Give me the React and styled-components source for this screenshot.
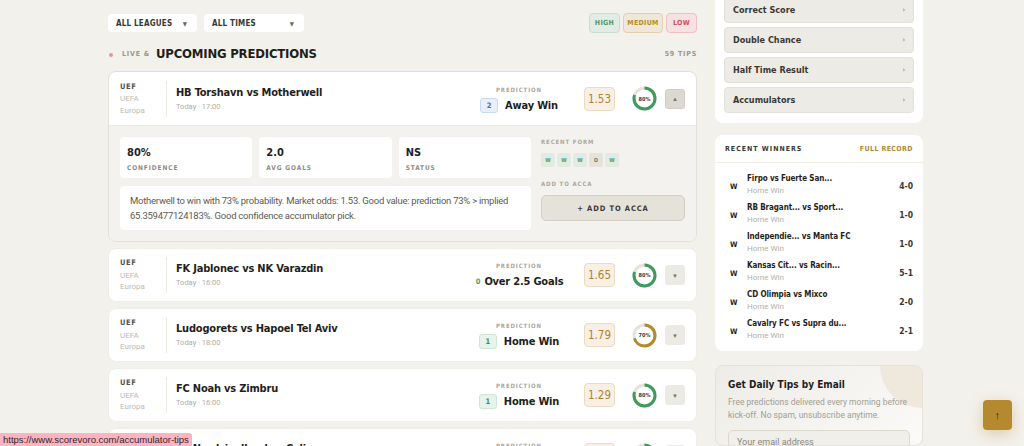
import React from "react";
import styled, { createGlobalStyle, css } from "styled-components";

const cond = css`
  font-family: "Noto Sans ExtraCondensed", "Noto Sans Condensed", "DejaVu Sans Condensed", sans-serif;
  font-weight: 700;
`;
const BODY = `Roboto, "Liberation Sans", sans-serif`;

const GlobalStyle = createGlobalStyle`
  html, body { margin: 0; padding: 0; background: #f3f1ec; overflow: hidden; }
  body { font-family: ${BODY}; color: #1f1e1b; }
  * { box-sizing: border-box; }
`;

const matches = [
  { id: 1, title: "HB Torshavn vs Motherwell", time: "Today · 17:00", code: "2", tone: "blue", pick: "Away Win", odds: "1.53", conf: 80, open: true },
  { id: 2, title: "FK Jablonec vs NK Varazdin", time: "Today · 16:00", code: "0", tone: "plain", pick: "Over 2.5 Goals", odds: "1.65", conf: 80 },
  { id: 3, title: "Ludogorets vs Hapoel Tel Aviv", time: "Today · 18:00", code: "1", tone: "green", pick: "Home Win", odds: "1.79", conf: 70 },
  { id: 4, title: "FC Noah vs Zimbru", time: "Today · 16:00", code: "1", tone: "green", pick: "Home Win", odds: "1.29", conf: 80 },
  { id: 5, title: "FC Nordsjaelland vs Celje", time: "Today · 18:00", code: "1", tone: "green", pick: "Home Win", odds: "1.48", conf: 80 },
];

const winners = [
  { t: "Firpo vs Fuerte San...", s: "4-0" },
  { t: "RB Bragant... vs Sport...", s: "1-0" },
  { t: "Independie... vs Manta FC", s: "1-0" },
  { t: "Kansas Cit... vs Racin...", s: "5-1" },
  { t: "CD Olimpia vs Mixco", s: "2-0" },
  { t: "Cavalry FC vs Supra du...", s: "2-1" },
];

const markets = ["Correct Score", "Double Chance", "Half Time Result", "Accumulators"];

const Page = styled.div`
  display: flex;
  gap: 18px;
  padding: 13px 0 0 108px;
  height: 446px;
  overflow: hidden;
`;

const Main = styled.div`
  width: 589px;
  display: flex;
  flex-direction: column;
  flex-shrink: 0;
`;

const Toolbar = styled.div`
  display: flex;
  align-items: center;
  justify-content: space-between;
  height: 20px;
`;

const Group = styled.div`
  display: flex;
  align-items: center;
  gap: ${(p) => p.gap || 7}px;
`;

const Select = styled.div`
  width: ${(p) => p.w}px;
  height: 18px;
  background: #fff;
  border-radius: 4px;
  display: flex;
  align-items: center;
  justify-content: space-between;
  padding: 0 8px 0 8px;
  ${cond};
  font-size: 8px;
  letter-spacing: 0.2px;
  color: #3a3833;
  span { font-size: 6px; color: #6b675f; margin-right: 2px; }
`;

const tones = {
  high: { bg: "#e3ece4", bd: "#c9dccd", fg: "#4f9a66" },
  medium: { bg: "#efe7da", bd: "#e2cfac", fg: "#b5892e" },
  low: { bg: "#f6e2e2", bd: "#efbfc3", fg: "#d0505a" },
};

const Pill = styled.div`
  height: 20px;
  width: ${(p) => p.w}px;
  border-radius: 4px;
  display: flex;
  align-items: center;
  justify-content: center;
  ${cond};
  font-size: 7px;
  letter-spacing: 0.3px;
  background: ${(p) => tones[p.tone].bg};
  border: 1px solid ${(p) => tones[p.tone].bd};
  color: ${(p) => tones[p.tone].fg};
`;

const HeadRow = styled.div`
  display: flex;
  align-items: center;
  justify-content: space-between;
  margin: 13px 0 10px;
  height: 16px;
`;

const Title = styled.div`
  display: flex;
  align-items: center;
  gap: 6px;
  padding-left: 1px;
`;

const Dot = styled.i`
  width: 4px;
  height: 4px;
  border-radius: 50%;
  background: #e3959b;
  margin-right: 3px;
  margin-top: 3px;
`;

const Small = styled.span`
  ${cond};
  font-size: 7px;
  letter-spacing: 0.8px;
  color: #9b978e;
`;

const Heading = styled.h2`
  margin: 0;
  ${cond};
  font-size: 13px;
  letter-spacing: -0.2px;
  color: #1f1e1b;
`;

const List = styled.div`
  display: flex;
  flex-direction: column;
  gap: 6px;
`;

const Card = styled.div`
  background: #fff;
  border: 1px solid ${(p) => (p.open ? "#e2dfd7" : "#f0eee9")};
  border-radius: 8px;
  overflow: hidden;
  flex-shrink: 0;
`;

const CardHead = styled.div`
  height: ${(p) => (p.open ? 53 : 52)}px;
  display: flex;
  align-items: center;
  padding: 0 11px;
`;

const League = styled.div`
  width: 46px;
  display: flex;
  flex-direction: column;
  font-size: 8px;
  line-height: 11.5px;
  color: #bdb9b0;
  b {
    ${cond};
    font-size: 7.5px;
    letter-spacing: 0.6px;
    color: #55524b;
    margin-bottom: 1px;
  }
`;

const Divider = styled.div`
  width: 1px;
  height: 36px;
  background: #eeebe5;
  margin-right: 9px;
`;

const MatchInfo = styled.div`
  flex: 1;
  display: flex;
  flex-direction: column;
  gap: 3px;
  margin-top: -1px;
`;

const MatchTitle = styled.div`
  ${cond};
  font-size: 11px;
  letter-spacing: -0.2px;
  color: #1f1e1b;
  white-space: nowrap;
`;

const Time = styled.div`
  font-size: 7.5px;
  color: #b0aca3;
`;

const Prediction = styled.div`
  width: 72px;
  display: flex;
  flex-direction: column;
  align-items: center;
  gap: 4px;
  margin-top: 1px;
`;

const Label = styled.div`
  ${cond};
  font-size: 6px;
  line-height: 8px;
  letter-spacing: 0.9px;
  color: #aaa69d;
`;

const PickRow = styled.div`
  display: flex;
  align-items: center;
  white-space: nowrap;
  gap: ${(p) => (p.plain ? 3 : 7)}px;
`;

const badge = {
  blue: { bg: "#e9effb", bd: "#c9d7f2", fg: "#3f6fd0" },
  green: { bg: "#e8f3eb", bd: "#cfe6d6", fg: "#3a8a55" },
  plain: { bg: "transparent", bd: "transparent", fg: "#4f9a66" },
};

const Badge = styled.div`
  width: ${(p) => (p.tone === "plain" ? "auto" : "18px")};
  height: 15px;
  border-radius: 3px;
  display: flex;
  align-items: center;
  justify-content: center;
  ${cond};
  font-size: 7.5px;
  background: ${(p) => badge[p.tone].bg};
  border: 1px solid ${(p) => badge[p.tone].bd};
  color: ${(p) => badge[p.tone].fg};
`;

const Pick = styled.div`
  ${cond};
  font-size: 11px;
  letter-spacing: -0.2px;
  color: #1f1e1b;
`;

const Odds = styled.div`
  width: 31px;
  height: 24px;
  margin-left: 29px;
  border-radius: 4px;
  background: #f8f0e4;
  border: 1px solid #eadbc1;
  display: flex;
  align-items: center;
  justify-content: center;
  ${cond};
  font-weight: 400;
  font-size: 11.5px;
  color: #b08329;
`;

const RingBox = styled.div`
  position: relative;
  width: 25px;
  height: 25px;
  margin-left: 17px;
  span {
    position: absolute;
    inset: 0;
    display: flex;
    align-items: center;
    justify-content: center;
    ${cond};
    font-size: 5.5px;
    color: #3a3833;
  }
`;

const Toggle = styled.div`
  width: 20px;
  height: 20px;
  margin-left: 8px;
  border-radius: 3px;
  background: ${(p) => (p.open ? "#dcd9d0" : "#eceae5")};
  border: 1px solid ${(p) => (p.open ? "#d2cec4" : "#eceae5")};
  display: flex;
  align-items: center;
  justify-content: center;
  font-size: 6px;
  color: #77736a;
`;

const Details = styled.div`
  background: #f4f2ee;
  border-top: 1px solid #eae7e0;
  padding: 11px 11px 11px;
  display: flex;
  gap: 10px;
`;

const DetailMain = styled.div`
  width: 411px;
  display: flex;
  flex-direction: column;
  gap: 8px;
`;

const Stats = styled.div`
  display: grid;
  grid-template-columns: repeat(3, 1fr);
  gap: 7px;
`;

const Stat = styled.div`
  height: 41px;
  background: #fff;
  border-radius: 4px;
  padding: 9px 7px 0;
  display: flex;
  flex-direction: column;
  gap: 5px;
  b {
    ${cond};
    font-size: 11px;
    color: #1f1e1b;
  }
`;

const StatLabel = styled.div`
  ${cond};
  font-size: 6.5px;
  letter-spacing: 0.9px;
  color: #8f8b82;
`;

const Desc = styled.div`
  height: 44px;
  background: #fff;
  border-radius: 4px;
  padding: 8px 10px;
  font-size: 9.5px;
  letter-spacing: -0.25px;
  line-height: 14.5px;
  color: #5d5a53;
`;

const Side = styled.div`
  flex: 1;
  display: flex;
  flex-direction: column;
  padding-top: 1px;
`;

const Form = styled.div`
  display: flex;
  gap: 2px;
  margin: 7px 0 13px;
`;

const FormBox = styled.div`
  width: 14px;
  height: 14px;
  border-radius: 2px;
  display: flex;
  align-items: center;
  justify-content: center;
  ${cond};
  font-size: 5.5px;
  background: ${(p) => (p.r === "W" ? "#e2ebe1" : "#e6e3dc")};
  color: ${(p) => (p.r === "W" ? "#4f9a66" : "#7d796f")};
`;

const AccaButton = styled.button`
  margin-top: 7px;
  height: 26px;
  width: 100%;
  border-radius: 5px;
  background: #e5e2da;
  border: 1px solid #d2cec4;
  ${cond};
  font-size: 7.5px;
  letter-spacing: 0.9px;
  color: #3a3833;
`;

const Sidebar = styled.div`
  width: 208px;
  flex-shrink: 0;
  margin-top: -17px;
  display: flex;
  flex-direction: column;
`;

const NavCard = styled.div`
  background: #fff;
  border-radius: 0 0 8px 8px;
  padding: 1px 9px 10px;
  display: flex;
  flex-direction: column;
  gap: 4px;
`;

const NavItem = styled.div`
  height: 26px;
  border-radius: 4px;
  background: #edebe6;
  border: 1px solid #e3e0d9;
  display: flex;
  align-items: center;
  justify-content: space-between;
  padding: 0 8px;
  ${cond};
  font-size: 9px;
  color: #3a3833;
  span { font-size: 7px; color: #8f8b82; }
`;

const Panel = styled.div`
  margin-top: 12px;
  background: #fff;
  border-radius: 8px;
`;

const PanelHead = styled.div`
  height: 28px;
  display: flex;
  align-items: center;
  justify-content: space-between;
  padding: 0 10px;
  border-bottom: 1px solid #f0ede7;
`;

const Gold = styled(Small)`
  color: #b5892e;
  letter-spacing: 0.4px;
`;

const Dark = styled(Small)`
  color: #3a3833;
  letter-spacing: 1px;
`;

const Rows = styled.div`
  padding: 7px 10px 7px 15px;
`;

const Row = styled.div`
  height: 29px;
  display: flex;
  align-items: center;
`;

const Mark = styled.div`
  width: 17px;
  ${cond};
  font-size: 7.5px;
  color: #1f1e1b;
  margin-top: 3px;
`;

const RowText = styled.div`
  flex: 1;
  display: flex;
  flex-direction: column;
  gap: 3px;
  b {
    ${cond};
    font-size: 8px;
    letter-spacing: -0.1px;
    color: #1f1e1b;
  }
  span { font-size: 8px; color: #b3afa6; }
`;

const Score = styled.div`
  ${cond};
  font-size: 8.5px;
  color: #3a3833;
  margin-top: 3px;
`;

const EmailCard = styled.div`
  position: relative;
  overflow: hidden;
  margin-top: 14px;
  border: 1px solid #e6e2d9;
  border-radius: 8px;
  background: linear-gradient(135deg, #eeece7 0%, #fbfaf8 100%);
  padding: 13px 12px 20px;
`;

const Blob = styled.div`
  position: absolute;
  top: -42px;
  right: -42px;
  width: 84px;
  height: 84px;
  border-radius: 50%;
  background: #efe8dc;
`;

const EmailTitle = styled.div`
  position: relative;
  ${cond};
  font-size: 10px;
  color: #1f1e1b;
`;

const EmailText = styled.p`
  position: relative;
  margin: 6px 0 9px;
  font-size: 8.5px;
  line-height: 12.5px;
  color: #a19d94;
`;

const Input = styled.div`
  height: 24px;
  border-radius: 5px;
  border: 1px solid #ddd8cc;
  background: #f1efea;
  padding: 0 8px;
  display: flex;
  align-items: center;
  font-size: 9px;
  color: #8b877e;
`;

const TopButton = styled.div`
  position: fixed;
  right: 12px;
  bottom: 16px;
  width: 29px;
  height: 30px;
  border-radius: 4px;
  background: #b5892e;
  box-shadow: 0 4px 14px rgba(181, 137, 46, 0.35);
  display: flex;
  align-items: center;
  justify-content: center;
  font-size: 11px;
  color: #3a2a0c;
`;

const StatusBar = styled.div`
  position: fixed;
  left: 0;
  bottom: 0;
  height: 13px;
  padding: 0 3px;
  background: #ffb3c1;
  border-top-right-radius: 3px;
  display: flex;
  align-items: center;
  font-family: "Liberation Sans", sans-serif;
  font-size: 9.5px;
  color: #2a2a2a;
`;

function Ring({ value }) {
  const r = 10.5;
  const c = 2 * Math.PI * r;
  const color = value >= 80 ? "#3f9a5e" : "#b5892e";
  return (
    <RingBox>
      <svg width="25" height="25" viewBox="0 0 25 25">
        <circle cx="12.5" cy="12.5" r={r} fill="none" stroke="#e6e3dc" strokeWidth="3" />
        <circle
          cx="12.5"
          cy="12.5"
          r={r}
          fill="none"
          stroke={color}
          strokeWidth="3"
          strokeDasharray={`${(c * value) / 100} ${c}`}
          transform="rotate(-90 12.5 12.5)"
        />
      </svg>
      <span>{value}%</span>
    </RingBox>
  );
}

function MatchCard({ m }) {
  return (
    <Card open={m.open}>
      <CardHead open={m.open}>
        <League>
          <b>UEF</b>
          <span>UEFA</span>
          <span>Europa</span>
        </League>
        <Divider />
        <MatchInfo>
          <MatchTitle>{m.title}</MatchTitle>
          <Time>{m.time}</Time>
        </MatchInfo>
        <Prediction>
          <Label>PREDICTION</Label>
          <PickRow plain={m.tone === "plain"}>
            <Badge tone={m.tone}>{m.code}</Badge>
            <Pick>{m.pick}</Pick>
          </PickRow>
        </Prediction>
        <Odds>{m.odds}</Odds>
        <Ring value={m.conf} />
        <Toggle open={m.open}>{m.open ? "▲" : "▼"}</Toggle>
      </CardHead>
      {m.open && (
        <Details>
          <DetailMain>
            <Stats>
              <Stat><b>80%</b><StatLabel>CONFIDENCE</StatLabel></Stat>
              <Stat><b>2.0</b><StatLabel>AVG GOALS</StatLabel></Stat>
              <Stat><b>NS</b><StatLabel>STATUS</StatLabel></Stat>
            </Stats>
            <Desc>
              Motherwell to win with 73% probability. Market odds: 1.53. Good value: prediction 73% &gt; implied
              65.359477124183%. Good confidence accumulator pick.
            </Desc>
          </DetailMain>
          <Side>
            <Label>RECENT FORM</Label>
            <Form>
              {["W", "W", "W", "D", "W"].map((r, i) => (
                <FormBox key={i} r={r}>{r}</FormBox>
              ))}
            </Form>
            <Label>ADD TO ACCA</Label>
            <AccaButton>+ ADD TO ACCA</AccaButton>
          </Side>
        </Details>
      )}
    </Card>
  );
}

export default function App() {
  return (
    <>
      <GlobalStyle />
      <Page>
        <Main>
          <Toolbar>
            <Group>
              <Select w={89}>ALL LEAGUES<span>▼</span></Select>
              <Select w={100}>ALL TIMES<span>▼</span></Select>
            </Group>
            <Group gap={3}>
              <Pill tone="high" w={31}>HIGH</Pill>
              <Pill tone="medium" w={40}>MEDIUM</Pill>
              <Pill tone="low" w={31}>LOW</Pill>
            </Group>
          </Toolbar>
          <HeadRow>
            <Title>
              <Dot />
              <Small>LIVE &amp;</Small>
              <Heading>UPCOMING PREDICTIONS</Heading>
            </Title>
            <Small>59 TIPS</Small>
          </HeadRow>
          <List>
            {matches.map((m) => (
              <MatchCard key={m.id} m={m} />
            ))}
          </List>
        </Main>
        <Sidebar>
          <NavCard>
            {markets.map((n) => (
              <NavItem key={n}>{n}<span>›</span></NavItem>
            ))}
          </NavCard>
          <Panel>
            <PanelHead>
              <Dark>RECENT WINNERS</Dark>
              <Gold>FULL RECORD</Gold>
            </PanelHead>
            <Rows>
              {winners.map((w) => (
                <Row key={w.t}>
                  <Mark>W</Mark>
                  <RowText>
                    <b>{w.t}</b>
                    <span>Home Win</span>
                  </RowText>
                  <Score>{w.s}</Score>
                </Row>
              ))}
            </Rows>
          </Panel>
          <EmailCard>
            <Blob />
            <EmailTitle>Get Daily Tips by Email</EmailTitle>
            <EmailText>Free predictions delivered every morning before kick-off. No spam, unsubscribe anytime.</EmailText>
            <Input>Your email address</Input>
          </EmailCard>
        </Sidebar>
      </Page>
      <TopButton>↑</TopButton>
      <StatusBar>https://www.scorevoro.com/accumulator-tips</StatusBar>
    </>
  );
}
